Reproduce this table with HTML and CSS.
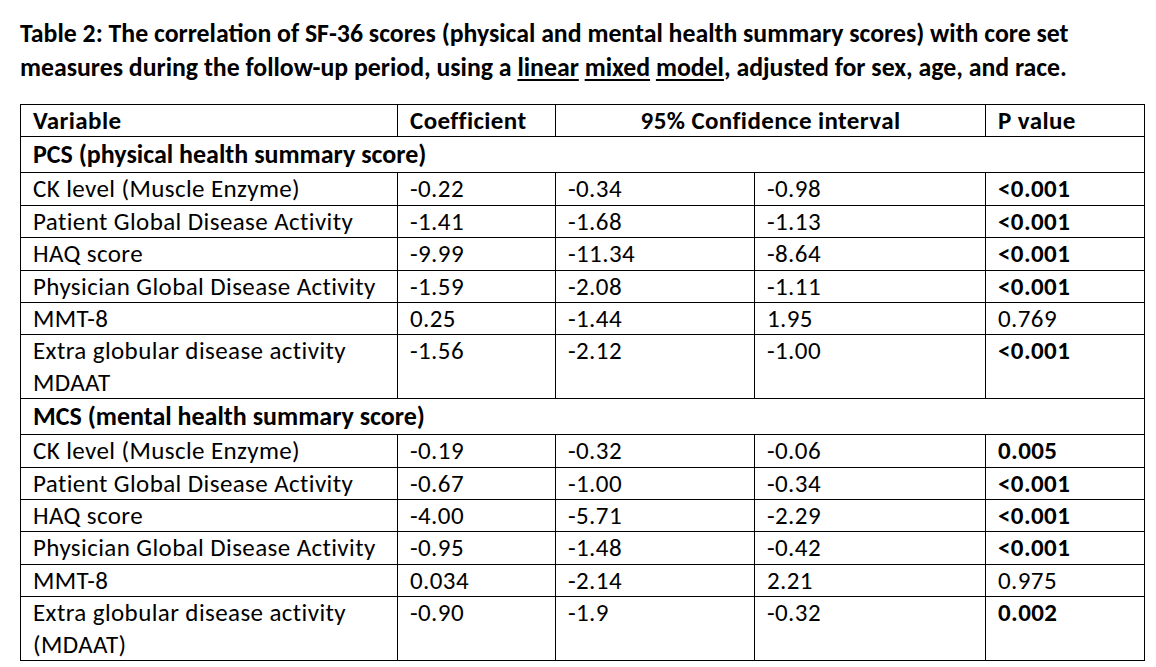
FILE: index.html
```html
<!DOCTYPE html>
<html lang="en">
<head>
<meta charset="utf-8">
<title>Table 2</title>
<link rel="stylesheet" href="styles.css">
</head>
<body>
<div class="page">
  <p class="caption">Table 2: The correlation of SF-36 scores (physical and mental health summary scores) with core set<br>measures during the follow-up period, using a <u>linear</u> <u>mixed</u> <u>model</u>, adjusted for sex, age, and race.</p>
  <table class="data">
    <colgroup>
      <col class="c-var">
      <col class="c-coef">
      <col class="c-lo">
      <col class="c-hi">
      <col class="c-p">
    </colgroup>
    <thead>
      <tr class="head">
        <th>Variable</th>
        <th>Coefficient</th>
        <th colspan="2" class="center">95% Confidence interval</th>
        <th>P value</th>
      </tr>
    </thead>
    <tbody>
      <tr class="group"><td colspan="5">PCS (physical health summary score)</td></tr>
      <tr><td>CK level (Muscle Enzyme)</td><td>-0.22</td><td>-0.34</td><td>-0.98</td><td class="b">&lt;0.001</td></tr>
      <tr><td>Patient Global Disease Activity</td><td>-1.41</td><td>-1.68</td><td>-1.13</td><td class="b">&lt;0.001</td></tr>
      <tr><td>HAQ score</td><td>-9.99</td><td>-11.34</td><td>-8.64</td><td class="b">&lt;0.001</td></tr>
      <tr><td>Physician Global Disease Activity</td><td>-1.59</td><td>-2.08</td><td>-1.11</td><td class="b">&lt;0.001</td></tr>
      <tr><td>MMT-8</td><td>0.25</td><td>-1.44</td><td>1.95</td><td>0.769</td></tr>
      <tr><td>Extra globular disease activity<br>MDAAT</td><td>-1.56</td><td>-2.12</td><td>-1.00</td><td class="b">&lt;0.001</td></tr>
      <tr class="group"><td colspan="5">MCS (mental health summary score)</td></tr>
      <tr><td>CK level (Muscle Enzyme)</td><td>-0.19</td><td>-0.32</td><td>-0.06</td><td class="b">0.005</td></tr>
      <tr><td>Patient Global Disease Activity</td><td>-0.67</td><td>-1.00</td><td>-0.34</td><td class="b">&lt;0.001</td></tr>
      <tr><td>HAQ score</td><td>-4.00</td><td>-5.71</td><td>-2.29</td><td class="b">&lt;0.001</td></tr>
      <tr><td>Physician Global Disease Activity</td><td>-0.95</td><td>-1.48</td><td>-0.42</td><td class="b">&lt;0.001</td></tr>
      <tr><td>MMT-8</td><td>0.034</td><td>-2.14</td><td>2.21</td><td>0.975</td></tr>
      <tr><td>Extra globular disease activity<br>(MDAAT)</td><td>-0.90</td><td>-1.9</td><td>-0.32</td><td class="b">0.002</td></tr>
    </tbody>
  </table>
</div>
</body>
</html>
```
FILE: styles.css
```css
html, body {
  margin: 0;
  padding: 0;
  background: #fff;
}
body {
  font-family: Carlito, Lato, "Open Sans", sans-serif;
  color: #000;
}
.page {
  padding: 16px 0 0 20px;
}
.caption {
  margin: 0 0 20px 0;
  font-size: 25.8px;
  line-height: 34px;
  font-weight: 700;
  white-space: nowrap;
}
.caption u {
  text-decoration-thickness: 2px;
  text-underline-offset: 3px;
}
.data {
  border-collapse: collapse;
  table-layout: fixed;
  width: 1124px;
}
.c-var { width: 377px; }
.c-coef { width: 158px; }
.c-lo { width: 199px; }
.c-hi { width: 231px; }
.c-p { width: 159px; }
.data th,
.data td {
  border: 1px solid #000;
  padding: 0 12px;
  font-size: 25px;
  letter-spacing: 0.4px;
  line-height: 31.4px;
  text-align: left;
  vertical-align: top;
  white-space: nowrap;
}
.data th {
  font-weight: 700;
}
.data th.center {
  text-align: center;
}
.data td.b {
  font-weight: 700;
}
.data tr.group td {
  font-size: 26px;
  letter-spacing: 0;
  line-height: 35px;
  font-weight: 700;
}
```
